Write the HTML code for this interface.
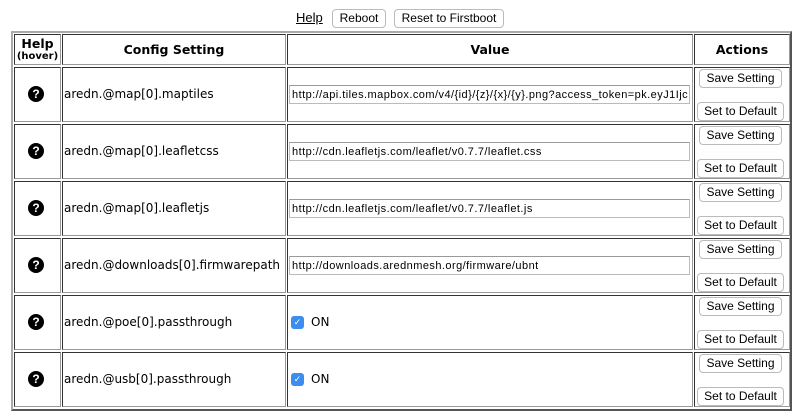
<!DOCTYPE html>
<html><head><style>
body{margin:0;width:800px;height:418px;background:#fff;font-family:"Liberation Sans",sans-serif;position:relative;overflow:hidden}
.a{position:absolute;box-sizing:border-box}
.c{border:1px solid;border-color:#333 #999 #999 #333}
.h{font-weight:bold;font-size:12.5px;display:flex;align-items:center;justify-content:center;font-family:"DejaVu Sans",sans-serif}
.btn{position:absolute;box-sizing:border-box;border:1px solid #bbb;border-radius:4px;background:#fff;font-size:12px;text-align:center;line-height:17px;color:#000}
.inp{position:absolute;left:289px;width:401px;height:19px;border:1px solid #bbb;border-top-color:#999;font-size:11px;line-height:18px;padding-left:2px;box-sizing:border-box;white-space:nowrap;overflow:hidden;letter-spacing:0.45px}
.t{font-size:12px;position:absolute;left:64px;font-family:"DejaVu Sans",sans-serif}
.q{position:absolute;left:28px;width:16px;height:16px;border-radius:50%;background:#000;color:#fff;font-weight:bold;font-size:12px;text-align:center;line-height:16px}
.cb{position:absolute;left:291px;width:13px;height:13px;background:#3b8ef0;border-radius:3px;color:#fff;font-size:9px;text-align:center;line-height:13px}
</style></head><body>
<div class="a" style="left:296px;top:10px;font-size:13px;text-decoration:underline">Help</div>
<div class="btn" style="left:332px;top:9px;width:54px;height:19px">Reboot</div>
<div class="btn" style="left:394px;top:9px;width:110px;height:19px">Reset to Firstboot</div>
<div class="a" style="left:11px;top:31px;width:781px;height:380px;border:2px solid;border-color:#aaa #555 #555 #aaa"></div>
<div class="a c h" style="left:14px;top:34px;width:47px;height:31px;flex-direction:column;line-height:13px">Help<span style="font-size:10px">(hover)</span></div>
<div class="a c h" style="left:62px;top:34px;width:224px;height:31px">Config Setting</div>
<div class="a c h" style="left:287px;top:34px;width:406px;height:31px">Value</div>
<div class="a c h" style="left:694px;top:34px;width:96px;height:31px">Actions</div>
<div id="rows"></div>
<script>
var names=["aredn.@map[0].maptiles","aredn.@map[0].leafletcss","aredn.@map[0].leafletjs","aredn.@downloads[0].firmwarepath","aredn.@poe[0].passthrough","aredn.@usb[0].passthrough"];
var vals=["http://api.tiles.mapbox.com/v4/{id}/{z}/{x}/{y}.png?access_token=pk.eyJ1Ijc","http://cdn.leafletjs.com/leaflet/v0.7.7/leaflet.css","http://cdn.leafletjs.com/leaflet/v0.7.7/leaflet.js","http://downloads.arednmesh.org/firmware/ubnt",null,null];
var h="";
for(var i=0;i<6;i++){var y=67+57*i;
h+='<div class="a c" style="left:14px;top:'+y+'px;width:47px;height:55px"></div>';
h+='<div class="a c" style="left:62px;top:'+y+'px;width:224px;height:55px"></div>';
h+='<div class="a c" style="left:287px;top:'+y+'px;width:406px;height:55px"></div>';
h+='<div class="a c" style="left:694px;top:'+y+'px;width:96px;height:55px"></div>';
h+='<div class="q" style="top:'+(y+19)+'px">?</div>';
h+='<div class="t" style="top:'+(y+20)+'px">'+names[i]+'</div>';
if(vals[i])h+='<div class="inp" style="top:'+(y+18)+'px">'+vals[i]+'</div>';
else h+='<div class="cb" style="top:'+(y+21)+'px">&#10003;</div><div class="a" style="left:311px;top:'+(y+20)+'px;font-size:12px;font-family:\'DejaVu Sans\',sans-serif">ON</div>';
h+='<div class="btn" style="left:699px;top:'+(y+2)+'px;width:83px;height:19px">Save Setting</div>';
h+='<div class="btn" style="left:697px;top:'+(y+35)+'px;width:87px;height:19px">Set to Default</div>';
}
document.getElementById("rows").innerHTML=h;
</script>
</body></html>
